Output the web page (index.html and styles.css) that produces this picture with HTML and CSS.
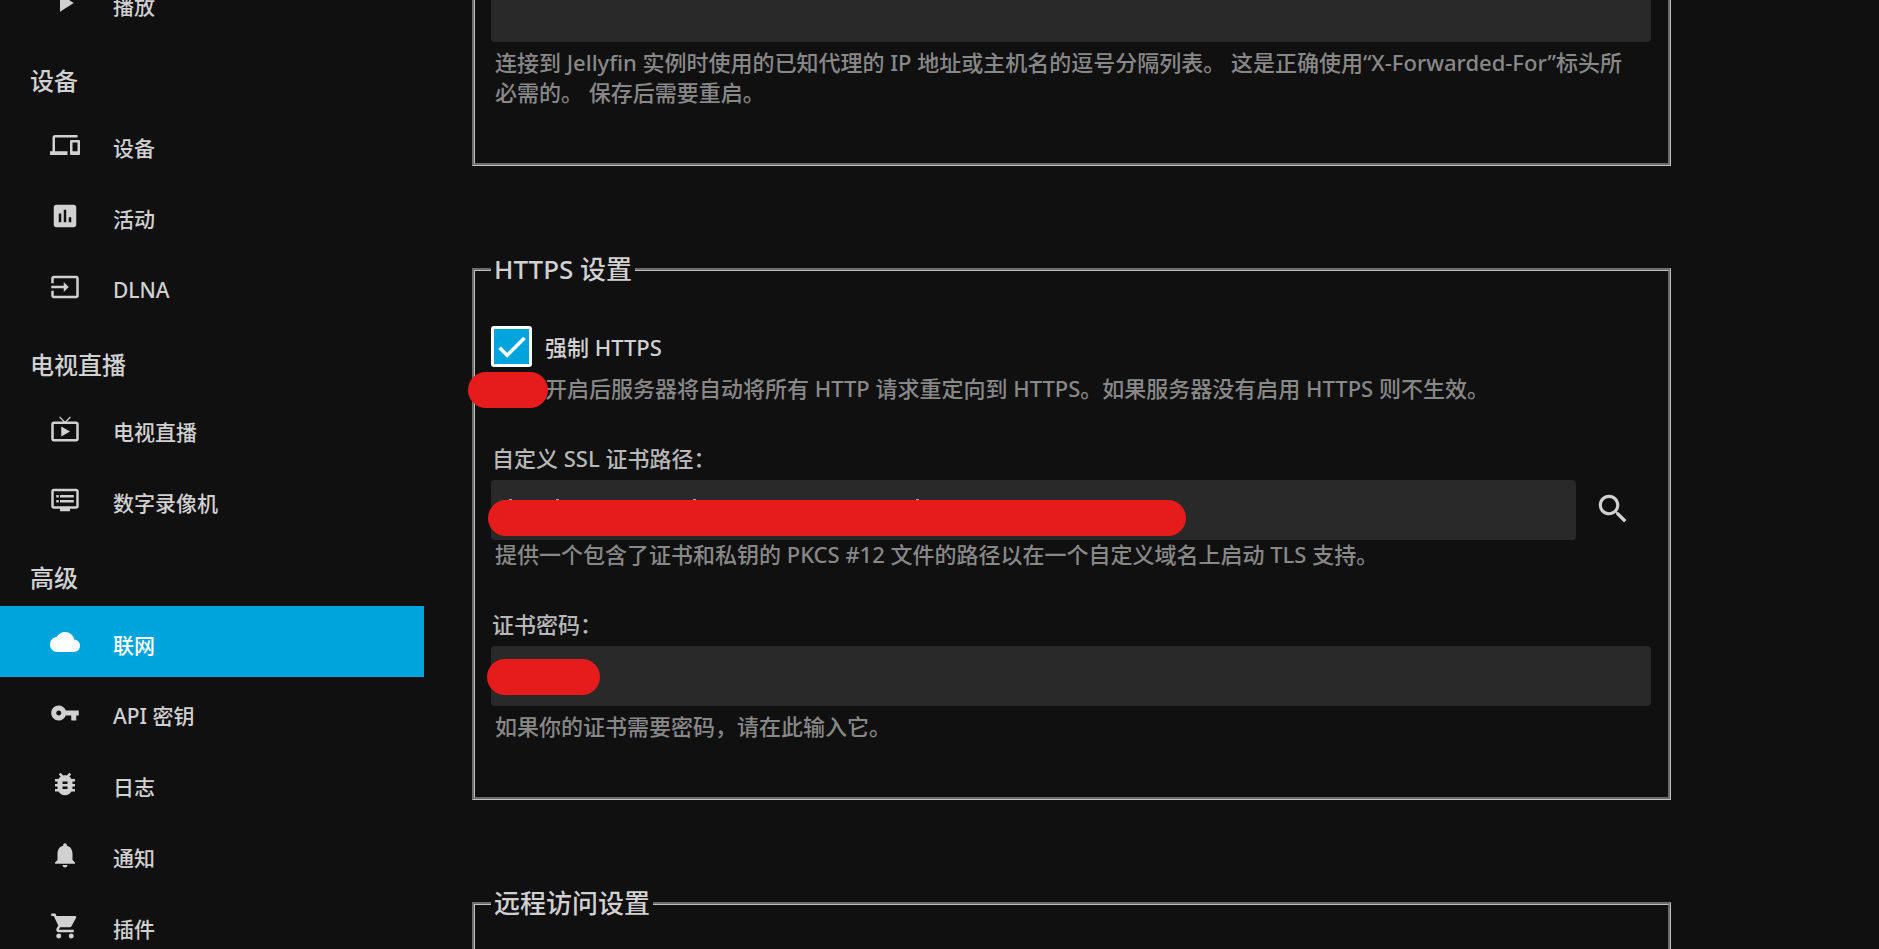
FILE: index.html
```html
<!DOCTYPE html>
<html lang="zh-CN">
<head>
    <meta charset="UTF-8">
    <meta name="viewport" content="width=device-width, initial-scale=1.0">
    <title>Jellyfin</title>
    <link rel="stylesheet" href="styles.css">
</head>
<body>
    <nav class="drawer">
        <a class="nav-link" href="#playback">
            <svg class="icon" viewBox="0 0 24 24"><path d="M8 5v14l11-7z"/></svg>
            <span class="nav-text">播放</span>
        </a>

        <h3 class="nav-header">设备</h3>
        <a class="nav-link" href="#devices">
            <svg class="icon" viewBox="0 0 24 24"><path d="M4 6h18V4H4c-1.1 0-2 .9-2 2v11H0v3h14v-3H4V6zm19 2h-6c-.55 0-1 .45-1 1v10c0 .55.45 1 1 1h6c.55 0 1-.45 1-1V9c0-.55-.45-1-1-1zm-1 9h-4v-7h4v7z"/></svg>
            <span class="nav-text">设备</span>
        </a>
        <a class="nav-link" href="#activity">
            <svg class="icon" viewBox="0 0 24 24"><path d="M19 3H5c-1.1 0-2 .9-2 2v14c0 1.1.9 2 2 2h14c1.1 0 2-.9 2-2V5c0-1.1-.9-2-2-2zM9 17H7v-7h2v7zm4 0h-2V7h2v10zm4 0h-2v-4h2v4z"/></svg>
            <span class="nav-text">活动</span>
        </a>
        <a class="nav-link" href="#dlna">
            <svg class="icon" viewBox="0 0 24 24"><path d="M21 3.01H3c-1.1 0-2 .9-2 2V9h2V4.99h18v14.03H3V15H1v4.01c0 1.1.9 1.98 2 1.98h18c1.1 0 2-.88 2-1.98v-14c0-1.11-.9-2-2-2zM11 16l4-4-4-4v3H1v2h10v3z"/></svg>
            <span class="nav-text">DLNA</span>
        </a>

        <h3 class="nav-header">电视直播</h3>
        <a class="nav-link" href="#livetv">
            <svg class="icon" viewBox="0 0 24 24"><path d="M21 6h-7.59l3.29-3.29L16 2l-4 4-4-4-.71.71L10.59 6H3c-1.1 0-2 .89-2 2v12c0 1.1.9 2 2 2h18c1.1 0 2-.9 2-2V8c0-1.11-.9-2-2-2zm0 14H3V8h18v12zM9 10v8l7-4z"/></svg>
            <span class="nav-text">电视直播</span>
        </a>
        <a class="nav-link" href="#dvr">
            <svg class="icon" viewBox="0 0 24 24"><path d="M21 3H3c-1.1 0-2 .9-2 2v12c0 1.1.9 2 2 2h5v2h8v-2h5c1.1 0 1.99-.9 1.99-2L23 5c0-1.1-.9-2-2-2zm0 14H3V5h18v12zm-2-9H8v2h11V8zm0 4H8v2h11v-2zM7 8H5v2h2V8zm0 4H5v2h2v-2z"/></svg>
            <span class="nav-text">数字录像机</span>
        </a>

        <h3 class="nav-header">高级</h3>
        <a class="nav-link active" href="#networking">
            <svg class="icon" viewBox="0 0 24 24"><path d="M19.35 10.04C18.67 6.59 15.64 4 12 4 9.11 4 6.6 5.64 5.35 8.04 2.34 8.36 0 10.91 0 14c0 3.31 2.69 6 6 6h13c2.76 0 5-2.24 5-5 0-2.64-2.05-4.78-4.65-4.96z"/></svg>
            <span class="nav-text">联网</span>
        </a>
        <a class="nav-link" href="#apikeys">
            <svg class="icon" viewBox="0 0 24 24"><path d="M12.65 10C11.83 7.67 9.61 6 7 6c-3.31 0-6 2.69-6 6s2.69 6 6 6c2.61 0 4.83-1.67 5.65-4H17v4h4v-4h2v-4H12.65zM7 14c-1.1 0-2-.9-2-2s.9-2 2-2 2 .9 2 2-.9 2-2 2z"/></svg>
            <span class="nav-text">API 密钥</span>
        </a>
        <a class="nav-link" href="#logs">
            <svg class="icon" viewBox="0 0 24 24"><path d="M20 8h-2.81c-.45-.78-1.07-1.45-1.82-1.96L17 4.41 15.59 3l-2.17 2.17C12.96 5.06 12.49 5 12 5c-.49 0-.96.06-1.41.17L8.41 3 7 4.41l1.62 1.63C7.88 6.55 7.26 7.22 6.81 8H4v2h2.09c-.05.33-.09.66-.09 1v1H4v2h2v1c0 .34.04.67.09 1H4v2h2.81c1.04 1.79 2.97 3 5.19 3s4.15-1.21 5.19-3H20v-2h-2.09c.05-.33.09-.66.09-1v-1h2v-2h-2v-1c0-.34-.04-.67-.09-1H20V8zm-6 8h-4v-2h4v2zm0-4h-4v-2h4v2z"/></svg>
            <span class="nav-text">日志</span>
        </a>
        <a class="nav-link" href="#notifications">
            <svg class="icon" viewBox="0 0 24 24"><path d="M12 22c1.1 0 2-.9 2-2h-4c0 1.1.89 2 2 2zm6-6v-5c0-3.07-1.64-5.64-4.5-6.32V4c0-.83-.67-1.5-1.5-1.5s-1.5.67-1.5 1.5v.68C7.63 5.36 6 7.92 6 11v5l-2 2v1h16v-1l-2-2z"/></svg>
            <span class="nav-text">通知</span>
        </a>
        <a class="nav-link" href="#plugins">
            <svg class="icon" viewBox="0 0 24 24"><path d="M7 18c-1.1 0-1.99.9-1.99 2S5.9 22 7 22s2-.9 2-2-.9-2-2-2zM1 2v2h2l3.6 7.59-1.35 2.45c-.16.28-.25.61-.25.96 0 1.1.9 2 2 2h12v-2H7.42c-.14 0-.25-.11-.25-.25l.03-.12.9-1.63h7.45c.75 0 1.41-.41 1.75-1.03l3.58-6.49c.08-.14.12-.31.12-.48 0-.55-.45-1-1-1H5.21l-.94-2H1zm16 16c-1.1 0-1.99.9-1.99 2s.89 2 1.99 2 2-.9 2-2-.9-2-2-2z"/></svg>
            <span class="nav-text">插件</span>
        </a>
    </nav>

    <main class="content">
        <form class="settings">
            <fieldset class="section">
                <div class="field">
                    <input class="text-input" type="text" aria-label="已知代理" aria-describedby="proxies-help">
                    <p class="description spaced" id="proxies-help">连接到 Jellyfin 实例时使用的已知代理的 IP 地址或主机名的逗号分隔列表。 这是正确使用“X-Forwarded-For”标头所必需的。 保存后需要重启。</p>
                </div>
            </fieldset>

            <fieldset class="section">
                <legend>HTTPS 设置</legend>
                <div class="field check-field">
                    <label class="check-label">
                        <input class="checkbox" type="checkbox" checked>
                        <span>强制 HTTPS</span>
                    </label>
                    <p class="description check-description">开启后服务器将自动将所有 HTTP 请求重定向到 HTTPS。如果服务器没有启用 HTTPS 则不生效。</p>
                    <span class="mask mask-check"></span>
                </div>
                <div class="field">
                    <label class="input-label" for="cert-path">自定义 SSL 证书路径：</label>
                    <div class="input-row">
                        <input class="text-input path-input" type="text" id="cert-path">
                        <button class="icon-button" type="button" aria-label="浏览">
                            <svg class="search-icon" viewBox="0 0 24 24"><path d="M15.5 14h-.79l-.28-.27C15.41 12.59 16 11.11 16 9.5 16 5.91 13.09 3 9.5 3S3 5.91 3 9.5 5.91 16 9.5 16c1.61 0 3.09-.59 4.23-1.57l.27.28v.79l5 4.99L20.49 19l-4.99-5zm-6 0C7.01 14 5 11.99 5 9.5S7.01 5 9.5 5 14 7.01 14 9.5 11.99 14 9.5 14z"/></svg>
                        </button>
                        <span class="mask mask-path"></span>
                    </div>
                    <p class="description">提供一个包含了证书和私钥的 PKCS #12 文件的路径以在一个自定义域名上启动 TLS 支持。</p>
                </div>
                <div class="field">
                    <label class="input-label" for="cert-password">证书密码：</label>
                    <div class="input-row">
                        <input class="text-input" type="password" id="cert-password">
                        <span class="mask mask-password"></span>
                    </div>
                    <p class="description spaced">如果你的证书需要密码，请在此输入它。</p>
                </div>
            </fieldset>

            <fieldset class="section">
                <legend>远程访问设置</legend>
            </fieldset>
        </form>
    </main>
</body>
</html>
```

FILE: styles.css
```css
* {
    box-sizing: border-box;
}

body {
    margin: 0;
    height: 100vh;
    display: flex;
    overflow: hidden;
    background: #101010;
    color: #d1d1d1;
    font-family: "Noto Sans", "Noto Sans CJK SC", sans-serif;
    font-size: 22px;
    font-weight: 500;
    line-height: 30px;
}

/* sidebar, scrolled down part of the way */
.drawer {
    flex: 0 0 424px;
    margin-top: -33px;
}

.nav-link {
    display: flex;
    align-items: center;
    gap: 33px;
    height: 71px;
    padding-left: 50px;
    color: inherit;
    font-size: 21px;
    text-decoration: none;
}

.nav-link.active {
    background: #00a4dc;
    color: #fff;
}

.nav-text {
    padding-top: 6px;
}

.nav-header {
    height: 71px;
    margin: 0;
    padding: 28px 0 0 30px;
    font-size: 24px;
    font-weight: 500;
}

.icon {
    width: 30px;
    height: 30px;
    fill: currentColor;
}

/* settings form */
.content {
    flex: 1;
    padding: 0 48px;
    margin-top: -60px;
}

.settings {
    max-width: 1199px;
}

.section {
    min-width: 0;
    margin: 0 0 86px;
    padding: 39px 17px 56px 16px;
    border: 3px groove #c0c0c0;
}

legend {
    padding: 0 3px;
    font-size: 26px;
    line-height: 35px;
}

.field + .field {
    margin-top: 40px;
}

.input-label {
    display: block;
    margin-bottom: 7px;
    padding-left: 1px;
    color: #b8b8b8;
}

.input-row {
    position: relative;
    display: flex;
    align-items: center;
}

.text-input {
    flex: 1;
    display: block;
    width: 100%;
    min-width: 0;
    height: 60px;
    padding: 0 12px;
    border: 0;
    border-radius: 4px;
    background: #292929;
    color: inherit;
    font: inherit;
}

/* tips of the path's letters that stick out above the red stroke */
.path-input {
    background:
        linear-gradient(#aaa, #aaa) 18px 19px / 3px 1px no-repeat,
        linear-gradient(#aaa, #aaa) 65px 19px / 3px 1px no-repeat,
        linear-gradient(#aaa, #aaa) 202px 19px / 3px 1px no-repeat,
        linear-gradient(#aaa, #aaa) 425px 19px / 3px 1px no-repeat,
        #292929;
}

.description {
    margin: -1px 0 0;
    padding: 0 20px 0 4px;
    color: #888;
}

.description.spaced {
    margin-top: 5px;
}

.icon-button {
    display: flex;
    justify-content: center;
    width: 75px;
    padding: 0 2px 2px 0;
    border: 0;
    background: none;
    color: inherit;
}

.search-icon {
    width: 38px;
    height: 38px;
    fill: currentColor;
}

.check-field {
    position: relative;
}

.check-label {
    display: flex;
    align-items: center;
    gap: 13px;
}

.checkbox {
    appearance: none;
    width: 41px;
    height: 41px;
    margin: 0;
    border: 3px solid #fff;
    border-radius: 3px;
    background: #00a4dc url("data:image/svg+xml,%3Csvg xmlns='http://www.w3.org/2000/svg' viewBox='0 0 24 24'%3E%3Cpath fill='%23fff' stroke='%23fff' stroke-width='.4' d='M9 16.17L4.83 12l-1.42 1.41L9 19 21 7l-1.41-1.41z'/%3E%3C/svg%3E") center / 36px no-repeat;
}

.description.check-description {
    margin-top: 6px;
    padding-left: 54px;
}

/* red strokes that hide private values */
.mask {
    position: absolute;
    height: 36px;
    border-radius: 18px;
    background: #e61c1c;
}

.mask-check {
    left: -23px;
    bottom: -5px;
    width: 80px;
}

.mask-path {
    left: -3px;
    top: 20px;
    width: 698px;
}

.mask-password {
    left: -4px;
    top: 13px;
    width: 113px;
}
```
